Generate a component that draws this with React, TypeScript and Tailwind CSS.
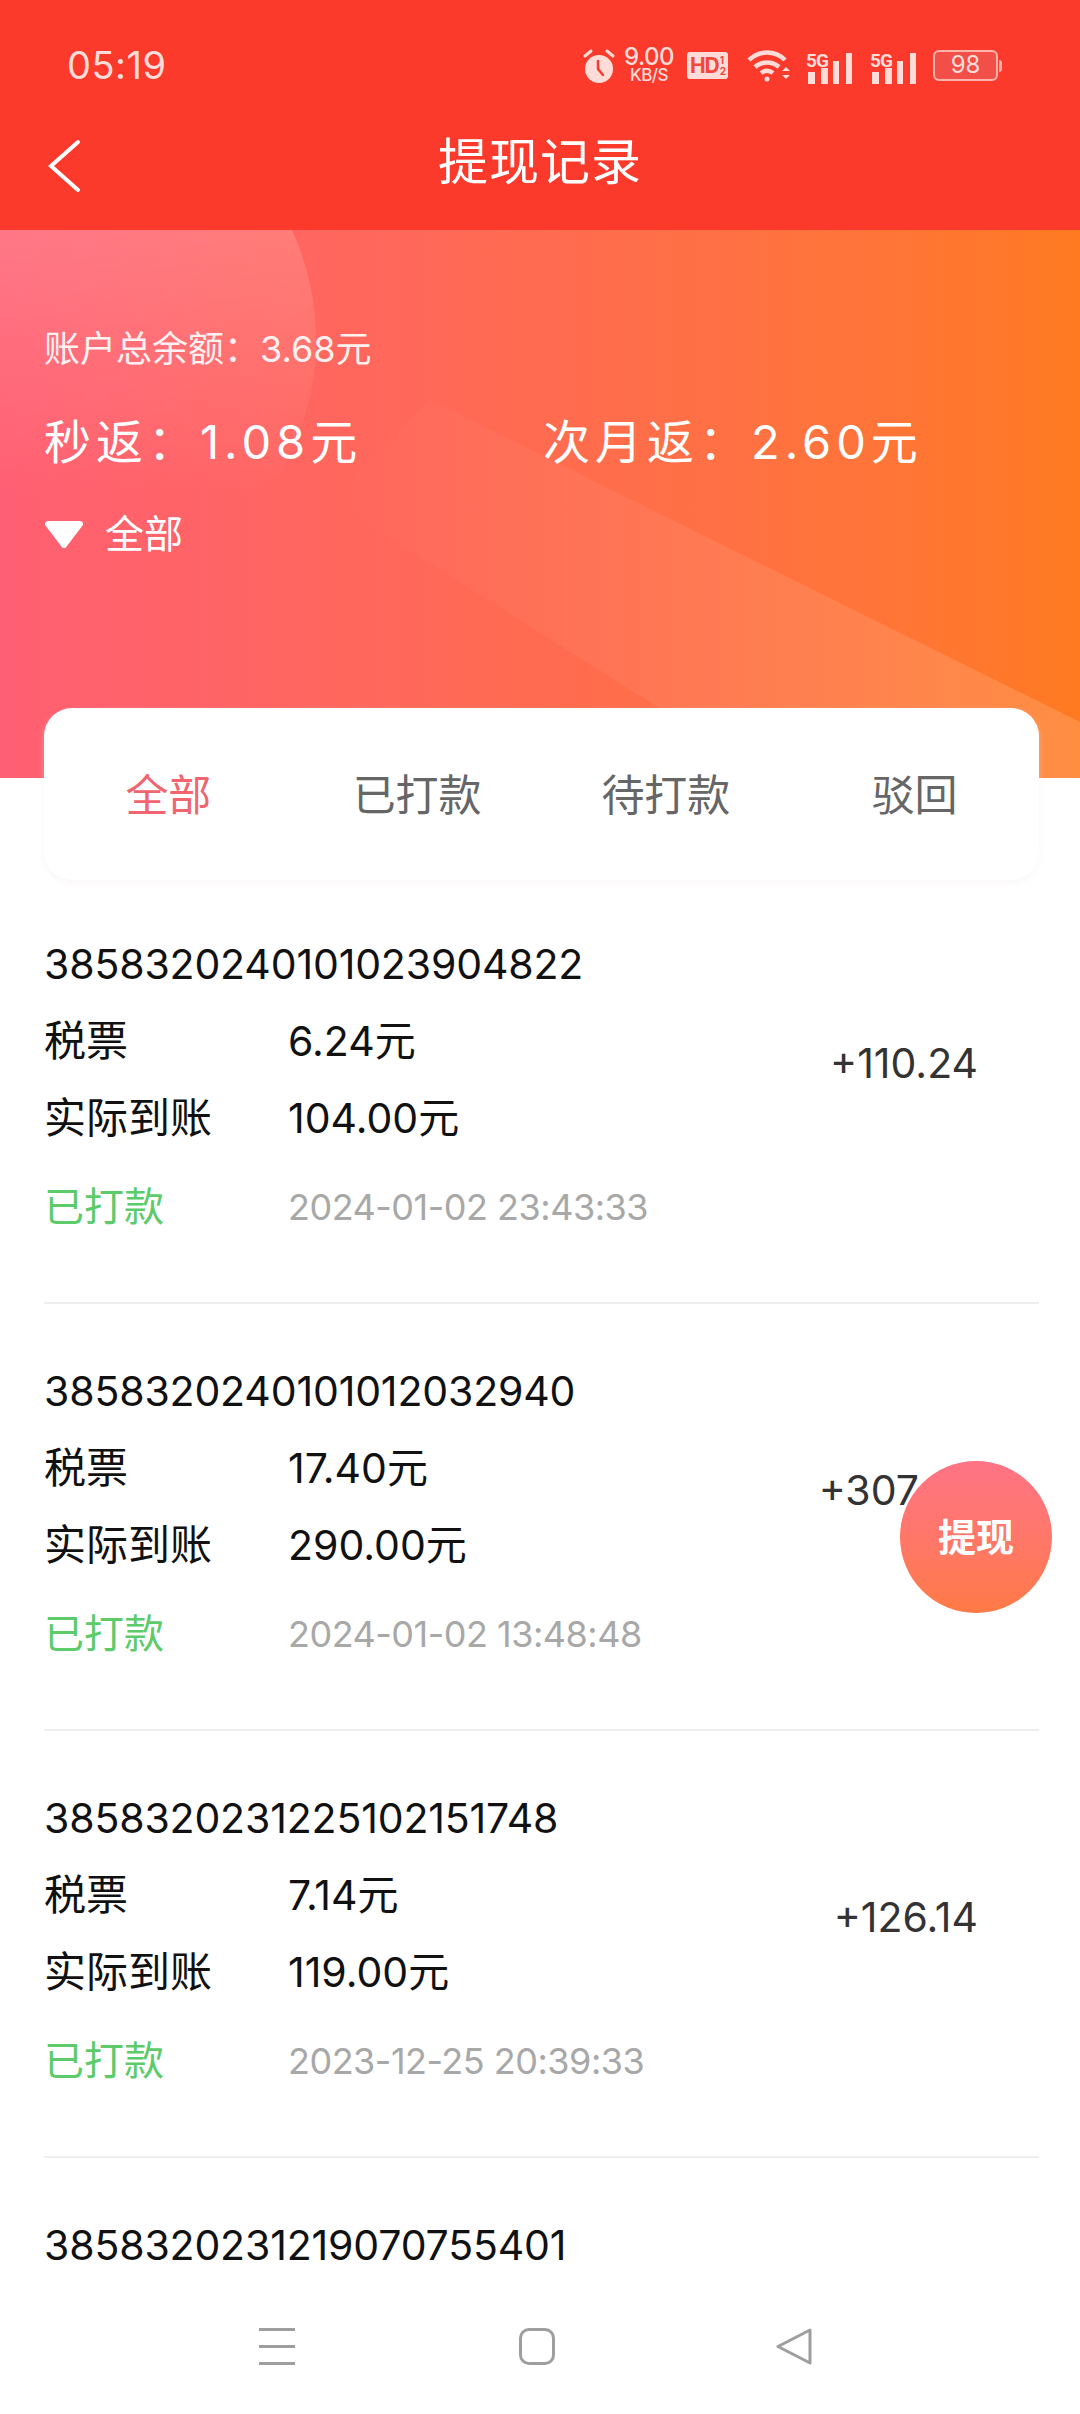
const records = [
  { no: "3858320240101023904822", tax: "6.24元", actual: "104.00元", time: "2024-01-02 23:43:33", amount: "+110.24" },
  { no: "3858320240101012032940", tax: "17.40元", actual: "290.00元", time: "2024-01-02 13:48:48", amount: "+307.40" },
  { no: "3858320231225102151748", tax: "7.14元", actual: "119.00元", time: "2023-12-25 20:39:33", amount: "+126.14" },
  { no: "3858320231219070755401", tax: "", actual: "", time: "", amount: "" },
];

const tabs = ["全部", "已打款", "待打款", "驳回"];

function SignalBars() {
  return (
    <svg width="47" height="36" viewBox="0 -4 47 36" fill="#ffdcd8">
      <rect x="2" y="20" width="7" height="12" />
      <rect x="15" y="16" width="7" height="16" />
      <rect x="27" y="9" width="6" height="23" />
      <rect x="40" y="1" width="6" height="31" />
      <text x="0" y="15" fontSize="19" fontWeight="700" letterSpacing="-1" fontFamily="Roboto, sans-serif">5G</text>
    </svg>
  );
}

function StatusBar() {
  return (
    <div className="flex h-[130px] items-center justify-between pl-[67px] pr-[78px] pt-[1px] text-[#ffdcd8]">
      <span className="text-[38px] tracking-[0.5px]">05:19</span>
      <div className="flex items-center">
        <svg width="34" height="36" viewBox="0 0 34 36" fill="#ffdcd8">
          <circle cx="17" cy="21" r="14" />
          <path d="M3 8l6-5M31 8l-6-5" stroke="#ffdcd8" strokeWidth="3" strokeLinecap="round" />
          <path d="M16 13v8l5 6" stroke="#fb3a2c" strokeWidth="2.500" fill="none" strokeLinecap="round" />
        </svg>
        <div className="ml-[8px] flex w-[50px] flex-col items-center font-medium">
          <span className="text-[24px] leading-[20px] tracking-[-0.5px]">9.00</span>
          <span className="text-[17px] leading-[17px] tracking-[-0.5px]">KB/S</span>
        </div>
        <span className="ml-[13px] flex h-[27px] w-[41px] items-center justify-center rounded-[3px] bg-[#ffdcd8] text-[21px] font-bold tracking-[-1px] text-[#f2483c]">
          HD
          <span className="ml-[1px] flex flex-col text-[10px] leading-[11px]">
            <span>1</span>
            <span>2</span>
          </span>
        </span>
        <svg className="ml-[19px]" width="45" height="32" viewBox="0 0 45 32" fill="none" stroke="#ffdcd8" strokeWidth="4.500">
          <path d="M2 10c10-10 26-10 36 0" />
          <path d="M8 17c7-6 17-6 24 0" />
          <path d="M14 23c4-3 8-3 12 0" />
          <circle cx="20" cy="29" r="2.500" fill="#ffdcd8" stroke="none" />
          <path d="M35 21l4-4 4 4zM35 25l4 4 4-4z" fill="#ffdcd8" stroke="none" />
        </svg>
        <span className="ml-[14px]">
          <SignalBars />
        </span>
        <span className="ml-[17px]">
          <SignalBars />
        </span>
        <div className="ml-[16px] flex items-center">
          <span className="flex h-[31px] w-[65px] items-center justify-center rounded-[6px] border-2 border-[#ffb4ac] bg-[#f24f48] pb-[1px] text-[24px] leading-none">
            98
          </span>
          <span className="ml-[1px] h-[12px] w-[3px] rounded-r-sm bg-[#ffb4ac]" />
        </div>
      </div>
    </div>
  );
}

function HeroBackdrop() {
  return (
    <svg className="absolute inset-0" width="1080" height="548" viewBox="0 0 1080 548">
      <defs>
        <linearGradient id="disc" x1="0" y1="0" x2="0" y2="1">
          <stop offset="0" stopColor="#fff" stopOpacity="0.24" />
          <stop offset="0.8" stopColor="#fff" stopOpacity="0" />
        </linearGradient>
        <linearGradient id="band" x1="0" y1="0" x2="1" y2="0">
          <stop offset="0" stopColor="#fff" stopOpacity="0" />
          <stop offset="0.35" stopColor="#fff" stopOpacity="0.05" />
          <stop offset="1" stopColor="#fff" stopOpacity="0.15" />
        </linearGradient>
      </defs>
      <ellipse cx="60" cy="110" rx="256" ry="260" fill="url(#disc)" />
      <path d="M430 170L1080 492V548H770L330 270Z" fill="url(#band)" />
    </svg>
  );
}

function RecordRow({ item }: { item: (typeof records)[number] }) {
  return (
    <div className="relative ml-[44px] mr-[41px] border-b-2 border-[#eeeeee] pb-[65px] pt-[57px] text-[#111111] last:border-b-0">
      <p className="text-[41px] leading-[60px] tracking-[-0.15px]">{item.no}</p>
      {item.tax && (
        <>
          <div className="mt-[17px] flex leading-[60px]">
            <span className="w-[244px] text-[42px]">税票</span>
            <span className="text-[41px]">{item.tax}</span>
          </div>
          <div className="mt-[17px] flex leading-[60px]">
            <span className="w-[244px] text-[42px]">实际到账</span>
            <span className="text-[41px]">{item.actual}</span>
          </div>
          <div className="mt-[29px] flex items-center leading-[60px]">
            <span className="w-[244px] text-[40px] text-[#5ccb6a]">已打款</span>
            <span className="text-[36px] tracking-[-0.5px] text-[#a8a8a8]">{item.time}</span>
          </div>
          <span className="absolute right-[61px] top-[156px] text-[41px] leading-[60px] text-[#333333]">{item.amount}</span>
        </>
      )}
    </div>
  );
}

export default function App() {
  return (
    <div className="relative flex h-[2414px] w-[1080px] flex-col overflow-hidden bg-white font-['Inter','Noto_Sans_CJK_SC',sans-serif]">
      <header className="bg-[#fb3a2c]">
        <StatusBar />
        <div className="relative flex h-[100px] items-start justify-center">
          <svg className="absolute left-[46px] top-[9px]" width="38" height="54" viewBox="0 0 38 54" fill="none" stroke="#fff" strokeWidth="4" strokeLinecap="round">
            <path d="M32 3L5 27l27 24" />
          </svg>
          <h1 className="text-[50px] leading-[64px] tracking-[1px] text-white">提现记录</h1>
        </div>
      </header>

      <section className="relative h-[548px] shrink-0 overflow-hidden bg-gradient-to-r from-[#ff5f72] via-[#ff6b50] to-[#ff7a20] px-[44px] text-white">
        <HeroBackdrop />
        <div className="relative pt-[96px]">
          <p className="text-[36px] leading-[46px] opacity-90">账户总余额：3.68元</p>
          <div className="mt-[40px] flex text-[47px] leading-[60px] tracking-[5px]">
            <span className="w-[499px]">秒返：1.08元</span>
            <span>次月返：2.60元</span>
          </div>
          <div className="mt-[37px] flex items-center text-[39px] leading-[50px]">
            <svg width="40" height="28" viewBox="0 0 40 28" fill="#fff">
              <path d="M4 4h32L20 25z" stroke="#fff" strokeWidth="6" strokeLinejoin="round" />
            </svg>
            <span className="ml-[21px]">全部</span>
          </div>
        </div>
      </section>

      <nav className="relative z-10 ml-[44px] mr-[41px] -mt-[70px] grid h-[172px] shrink-0 grid-cols-4 rounded-[28px] bg-white text-center text-[43px] text-[#666666] shadow-[0_3px_6px_rgba(240,230,230,0.35)]">
        {tabs.map((tab, i) => (
          <span key={tab} className={i === 0 ? "pt-[57px] leading-[60px] text-[#f0656f]" : "pt-[57px] leading-[60px]"}>
            {tab}
          </span>
        ))}
      </nav>

      <main className="-mt-[3px] min-h-0 flex-1 overflow-hidden">
        {records.map((item) => (
          <RecordRow key={item.no} item={item} />
        ))}
      </main>

      <footer className="flex h-[126px] shrink-0 items-start bg-white pt-[40px]">
        <div className="ml-[259px] flex h-[37px] w-[36px] flex-col justify-between">
          <span className="h-[3px] bg-[#9e9e9e]" />
          <span className="h-[3px] bg-[#9e9e9e]" />
          <span className="h-[3px] bg-[#9e9e9e]" />
        </div>
        <span className="ml-[224px] h-[37px] w-[36px] rounded-[10px] border-[3px] border-[#9e9e9e]" />
        <svg className="ml-[221px]" width="36" height="37" viewBox="0 0 36 37" fill="none" stroke="#9e9e9e" strokeWidth="3" strokeLinejoin="round">
          <path d="M34 2L2 18.500 34 35Z" />
        </svg>
      </footer>

      <button className="absolute left-[900px] top-[1461px] flex h-[152px] w-[152px] items-center justify-center rounded-full bg-gradient-to-b from-[#ff7385] to-[#ff7a45] text-[38px] font-bold text-white">
        提现
      </button>
    </div>
  );
}
